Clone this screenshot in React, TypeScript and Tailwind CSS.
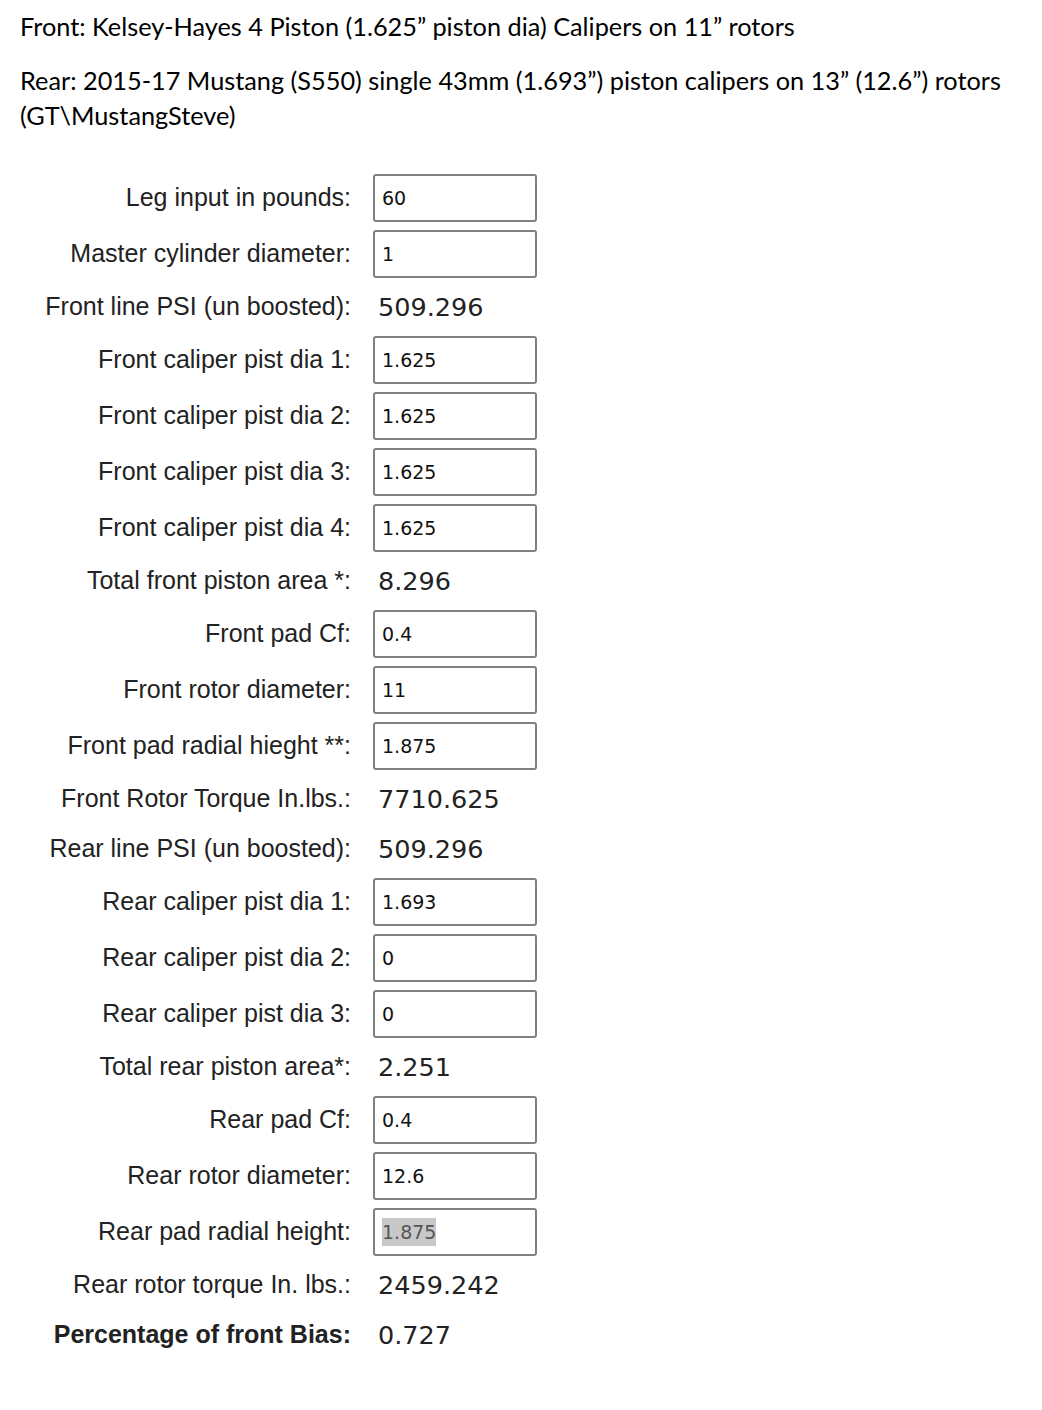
const rows: { label: string; value: string; input?: boolean; bold?: boolean; selected?: boolean }[] = [
  { label: 'Leg input in pounds:', value: '60', input: true },
  { label: 'Master cylinder diameter:', value: '1', input: true },
  { label: 'Front line PSI (un boosted):', value: '509.296' },
  { label: 'Front caliper pist dia 1:', value: '1.625', input: true },
  { label: 'Front caliper pist dia 2:', value: '1.625', input: true },
  { label: 'Front caliper pist dia 3:', value: '1.625', input: true },
  { label: 'Front caliper pist dia 4:', value: '1.625', input: true },
  { label: 'Total front piston area *:', value: '8.296' },
  { label: 'Front pad Cf:', value: '0.4', input: true },
  { label: 'Front rotor diameter:', value: '11', input: true },
  { label: 'Front pad radial hieght **:', value: '1.875', input: true },
  { label: 'Front Rotor Torque In.lbs.:', value: '7710.625' },
  { label: 'Rear line PSI (un boosted):', value: '509.296' },
  { label: 'Rear caliper pist dia 1:', value: '1.693', input: true },
  { label: 'Rear caliper pist dia 2:', value: '0', input: true },
  { label: 'Rear caliper pist dia 3:', value: '0', input: true },
  { label: 'Total rear piston area*:', value: '2.251' },
  { label: 'Rear pad Cf:', value: '0.4', input: true },
  { label: 'Rear rotor diameter:', value: '12.6', input: true },
  { label: 'Rear pad radial height:', value: '1.875', input: true, selected: true },
  { label: 'Rear rotor torque In. lbs.:', value: '2459.242' },
  { label: 'Percentage of front Bias:', value: '0.727', bold: true },
];

export default function App() {
  return (
    <div className="min-h-[1410px] bg-white text-black">
      {/* Notes */}
      <div className="pl-5 pt-[9px] font-['Lato',sans-serif] text-[25.3px] leading-[35px]">
        <p>Front: Kelsey-Hayes 4 Piston (1.625” piston dia) Calipers on 11” rotors</p>
        <p className="mt-[19px]">
          Rear: 2015-17 Mustang (S550) single 43mm (1.693”) piston calipers on 13” (12.6”) rotors (GT\MustangSteve)
        </p>
      </div>

      {/* Calculator */}
      <div className="mt-[37px] grid grid-cols-[351px_1fr] gap-x-[22px]">
        {rows.map((r) => (
          <div key={r.label} className="contents">
            <div
              className={`flex items-center justify-end font-['Liberation_Sans',Arial,sans-serif] text-[25px] text-[#222] ${
                r.input ? 'h-14' : 'h-[50px]'
              } ${r.bold ? 'font-bold' : ''}`}
            >
              {r.label}
            </div>
            <div className={`flex items-center ${r.input ? 'h-14' : 'h-[50px]'}`}>
              {r.input ? (
                <div className="flex h-12 w-[164px] items-center rounded-[3px] border-2 border-[#808080] px-[7px] font-['DejaVu_Sans',Verdana,sans-serif] text-[19px] text-[#111]">
                  <span className={r.selected ? 'bg-[#c8c8c8] text-[#555]' : ''}>{r.value}</span>
                </div>
              ) : (
                <span className="pl-[5px] font-['DejaVu_Sans',Verdana,sans-serif] text-[25.5px] text-[#222]">
                  {r.value}
                </span>
              )}
            </div>
          </div>
        ))}
      </div>
    </div>
  );
}
